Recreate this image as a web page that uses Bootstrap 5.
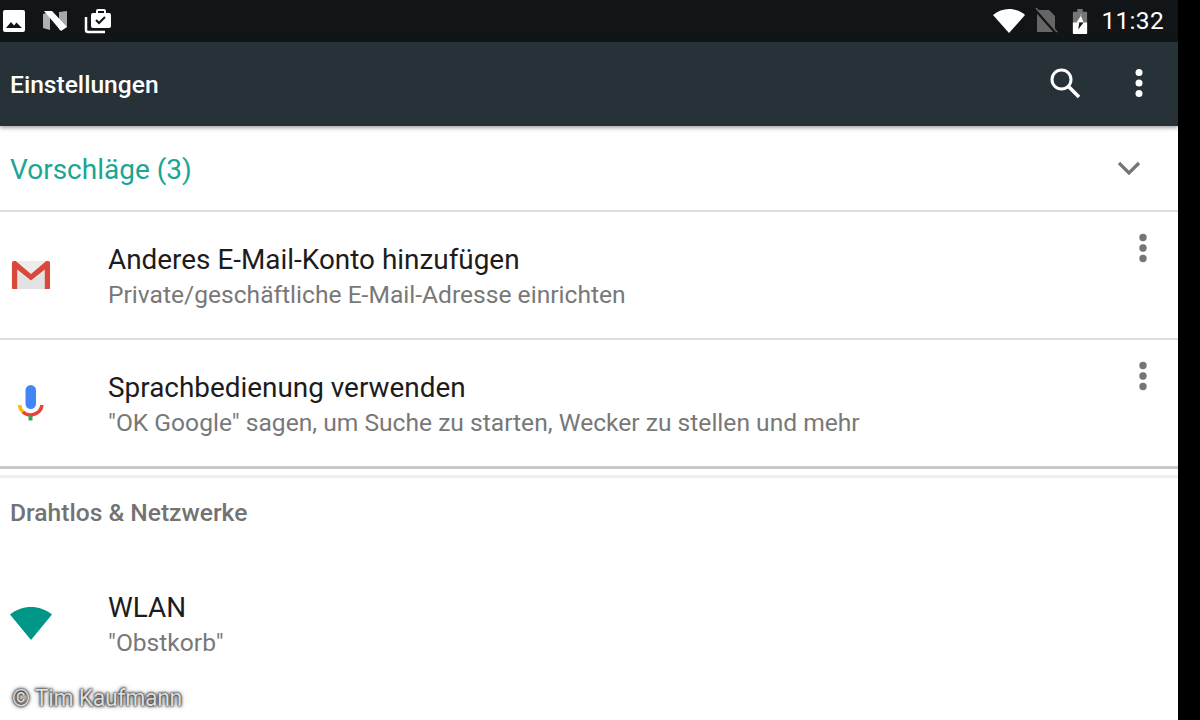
<!DOCTYPE html>
<html lang="de">
<head>
<meta charset="utf-8">
<title>Einstellungen</title>
<link href="https://cdn.jsdelivr.net/npm/bootstrap@5.3.0/dist/css/bootstrap.min.css" rel="stylesheet">
<style>
html,body{height:720px;overflow:hidden;background:#000;margin:0}
body{font-family:Roboto,"Liberation Sans",sans-serif;width:1200px}
.screen{width:1178px;height:720px;background:#fff;position:relative;overflow:hidden}
.status-row{height:42px;background:#121517;color:#fff;padding:0 14px 0 2px}
.status-time{font-size:24.5px;line-height:1;letter-spacing:.3px;margin-left:13px}
.gap-sim{margin-left:9px}
.gap-batt{margin-left:14px}
.tool-row{height:84px;background:#263238;color:#fff;padding-left:10px;box-shadow:0 2px 4px rgba(0,0,0,.35);position:relative;z-index:2}
.tool-title{font-size:24.6px;font-weight:500;line-height:1;margin-top:2px}
.tool-search{margin-right:-1px;margin-top:-2px}
.tool-more{margin:-2px 34px 0 53px}
.sugg-row{height:86px;padding:0 0 0 10px;border-bottom:2px solid #dcdcdc}
.sugg-title{font-size:28px;color:#1aa594;line-height:1;margin-top:3px}
.sugg-chev{margin-right:37px}
.pref-row{height:128px;border-bottom:2px solid #dcdcdc;position:relative}
.pref-row.last-one{border-bottom:3px solid #c8c8c8;height:129px}
.icon-slot{width:108px;padding-left:10px;flex:none}
.pref-text{margin-top:4px}
.pref-title{font-size:27.9px;line-height:32px;color:#1c1c1c}
.pref-sub{font-size:24.6px;line-height:30px;color:#787878;margin-top:4px}
.sect-gap{height:9px;border-bottom:3px solid #eeeeee}
.sect-title{font-size:24.6px;font-weight:500;color:#737373;line-height:28px;padding:21px 0 0 10px}
.wifi-row{height:130px;margin-top:33px}
.wifi-glyph{margin-top:-3px}
.gmail-glyph{margin-left:1px}
.more-dots{position:absolute;right:30px;top:21px}
.mark-note{position:absolute;left:12px;top:686px;font-size:23px;line-height:26px;color:#ddd;letter-spacing:-.3px;text-shadow:0 0 3px #222,0 0 2px #222,0 0 5px rgba(0,0,0,.6)}
</style>
</head>
<body>
<div class="screen">
  <div class="status-row d-flex align-items-center">
    <svg width="24" height="24" viewBox="0 0 24 24" class="me-3"><rect x="1" y="1" width="22" height="22" rx="2" fill="#fff"/><path d="M4 19l5-6 3 3.500 2.500-3 5.500 5.500z" fill="#121517"/></svg>
    <svg width="26" height="22" viewBox="0 0 26 22" class="me-3"><path d="M1 4l7-2v18l-7-2z" fill="#b0b0b0"/><path d="M17 2l8-1v16l-8 3z" fill="#a8a8a8"/><path d="M2 1h8l15 16-6 4z" fill="#fff"/></svg>
    <svg width="28" height="26" viewBox="0 0 28 26"><path d="M2 9v13a2 2 0 0 0 2 2h17" fill="none" stroke="#fff" stroke-width="2.500"/><rect x="7" y="5" width="20" height="15" rx="2" fill="#fff"/><path d="M13 6V3a1 1 0 0 1 1-1h6a1 1 0 0 1 1 1v3" fill="none" stroke="#fff" stroke-width="2"/><path d="M12 12l3 3 6-6" fill="none" stroke="#121517" stroke-width="2"/></svg>
    <div class="ms-auto d-flex align-items-center">
      <svg width="32" height="24" viewBox="0 0 32 24"><path d="M0 6C9-2 23-2 32 6L16 24z" fill="#fff"/></svg>
      <svg width="24" height="26" viewBox="0 0 24 26" class="gap-sim"><path d="M3 2h12l6 6v16H3z" fill="#666"/><path d="M1 1l21 24" stroke="#121517" stroke-width="3"/><path d="M2 0l21 24" stroke="#666" stroke-width="1.500"/></svg>
      <svg width="16" height="25" viewBox="0 0 18 28" class="gap-batt"><path d="M6 0h6v3h4a1 1 0 0 1 1 1v23a1 1 0 0 1-1 1H2a1 1 0 0 1-1-1V4a1 1 0 0 1 1-1h4z" fill="#777"/><path d="M1 15h16v12a1 1 0 0 1-1 1H2a1 1 0 0 1-1-1z" fill="#fff"/><path d="M11 6l-6 9h3.200l-.2 1.500V15h5L9.500 6z" fill="#fff"/><path d="M8.200 15L7 23l6-8z" fill="#121517"/></svg>
      <span class="status-time">11:32</span>
    </div>
  </div>
  <div class="tool-row d-flex align-items-center">
    <span class="tool-title">Einstellungen</span>
    <svg width="34" height="34" viewBox="0 0 34 34" class="ms-auto tool-search"><circle cx="13.500" cy="13.500" r="9.500" fill="none" stroke="#fff" stroke-width="3"/><path d="M20.500 20.500L31 31" stroke="#fff" stroke-width="3.500"/></svg>
    <svg width="10" height="30" viewBox="0 0 10 30" class="tool-more"><circle cx="5" cy="4.500" r="3.500" fill="#fff"/><circle cx="5" cy="15" r="3.500" fill="#fff"/><circle cx="5" cy="25.500" r="3.500" fill="#fff"/></svg>
  </div>
  <div class="sugg-row d-flex align-items-center">
    <span class="sugg-title">Vorschläge (3)</span>
    <svg width="24" height="16" viewBox="0 0 24 16" class="ms-auto sugg-chev"><path d="M2 3l10 10L22 3" fill="none" stroke="#757575" stroke-width="3.200"/></svg>
  </div>
  <div class="pref-row d-flex align-items-center">
    <div class="icon-slot">
      <svg width="40" height="30" viewBox="0 0 42 30" class="gmail-glyph" preserveAspectRatio="none"><path d="M2 1h38v28H2z" fill="#ececec"/><path d="M6 29V10l15 12 15-12v19z" fill="#e2e2e2"/><path d="M3 1h2l16 13L37 1h2a2 2 0 0 1 2 2v25a1 1 0 0 1-1 1h-4.500V9.500L21 20.500 6.500 9.500V29H2a1 1 0 0 1-1-1V3a2 2 0 0 1 2-2z" fill="#d9483b"/></svg>
    </div>
    <div class="flex-grow-1 pref-text">
      <div class="pref-title">Anderes E-Mail-Konto hinzufügen</div>
      <div class="pref-sub">Private/geschäftliche E-Mail-Adresse einrichten</div>
    </div>
    <svg class="more-dots" width="10" height="30" viewBox="0 0 10 30"><circle cx="5" cy="4.500" r="3.700" fill="#757575"/><circle cx="5" cy="15" r="3.700" fill="#757575"/><circle cx="5" cy="25.500" r="3.700" fill="#757575"/></svg>
  </div>
  <div class="pref-row last-one d-flex align-items-center">
    <div class="icon-slot">
      <svg width="42" height="38" viewBox="0 0 42 38"><rect x="15.500" y="1" width="10.500" height="24" rx="5.250" fill="#4285f4"/><path d="M9.500 21a11.500 11.500 0 0 0 4 7.500" fill="none" stroke="#fbbc05" stroke-width="3.500"/><path d="M13 28a11.500 11.500 0 0 0 19-7" fill="none" stroke="#ea4335" stroke-width="3.500"/><rect x="18.500" y="31.500" width="4" height="5" fill="#34a853"/></svg>
    </div>
    <div class="flex-grow-1 pref-text">
      <div class="pref-title">Sprachbedienung verwenden</div>
      <div class="pref-sub">"OK Google" sagen, um Suche zu starten, Wecker zu stellen und mehr</div>
    </div>
    <svg class="more-dots" width="10" height="30" viewBox="0 0 10 30"><circle cx="5" cy="4.500" r="3.700" fill="#757575"/><circle cx="5" cy="15" r="3.700" fill="#757575"/><circle cx="5" cy="25.500" r="3.700" fill="#757575"/></svg>
  </div>
  <div class="sect-gap"></div>
  <div class="sect-title">Drahtlos &amp; Netzwerke</div>
  <div class="wifi-row d-flex align-items-center">
    <div class="icon-slot">
      <svg width="42" height="33" viewBox="0 0 42 33" class="wifi-glyph"><path d="M0 7.500C12-2.500 30-2.500 42 7.500L21 33z" fill="#009688"/></svg>
    </div>
    <div class="flex-grow-1">
      <div class="pref-title">WLAN</div>
      <div class="pref-sub">"Obstkorb"</div>
    </div>
  </div>
  <div class="mark-note">© Tim Kaufmann</div>
</div>
<script src="https://cdn.jsdelivr.net/npm/bootstrap@5.3.0/dist/js/bootstrap.bundle.min.js"></script>
</body>
</html>
